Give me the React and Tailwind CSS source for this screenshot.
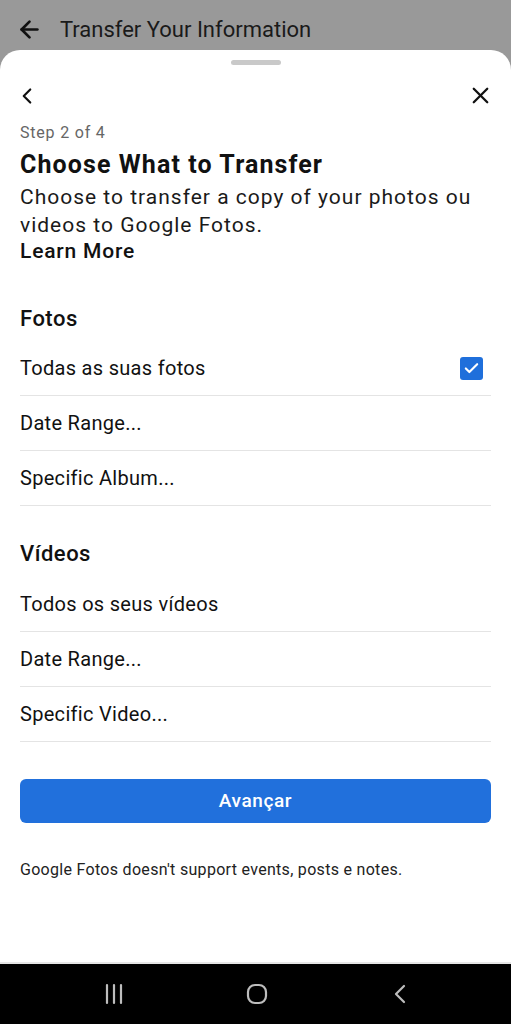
import { ArrowLeft, ChevronLeft, X, Check } from "lucide-react";

const font = { fontFamily: "Roboto, 'Noto Sans', sans-serif" };

function Row({ label, checked }) {
  return (
    <div className="flex h-[55px] items-center justify-between border-b border-[#e4e4e4]">
      <span className="text-[20px] tracking-[0.3px] text-[#111]">{label}</span>
      {checked && (
        <span className="mr-[8px] flex h-[23px] w-[23px] items-center justify-center rounded-[3px] bg-[#1f6fdb]">
          <Check className="h-[17px] w-[17px] text-white" strokeWidth={3} />
        </span>
      )}
    </div>
  );
}

export default function App() {
  return (
    <div className="flex h-[1024px] w-[511px] flex-col bg-[#999999]" style={font}>
      {/* top app bar behind the sheet */}
      <div className="flex h-[50px] shrink-0 items-center px-[16px] pt-[9px]">
        <ArrowLeft className="h-[27px] w-[27px] text-[#111]" strokeWidth={2.4} />
        <span className="ml-[17px] text-[22px] text-[#1a1a1a]">Transfer Your Information</span>
      </div>

      {/* bottom sheet */}
      <div className="flex flex-1 flex-col rounded-t-[20px] bg-white">
        <div className="flex justify-center pt-[10px]">
          <div className="h-[5px] w-[50px] rounded-full bg-[#c9c9c9]" />
        </div>

        <div className="flex flex-1 flex-col px-[20px]">
          <div className="mt-[17px] flex items-center justify-between">
            <ChevronLeft className="-ml-[6px] h-[26px] w-[26px] text-[#111]" strokeWidth={2} />
            <X className="-mr-[3px] h-[27px] w-[27px] text-[#111]" strokeWidth={2} />
          </div>

          <div className="mt-[14px] text-[16px] leading-[20px] tracking-[0.8px] text-[#666]">Step 2 of 4</div>
          <div className="mt-[7px] text-[25px] font-bold leading-[30px] tracking-[1.1px] text-[#111]">
            Choose What to Transfer
          </div>
          <p className="mt-[3px] text-[21px] leading-[28px] tracking-[1px] text-[#1a1a1a]">
            Choose to transfer a copy of your photos ou videos to Google Fotos.
          </p>
          <div className="text-[21px] font-medium leading-[24px] tracking-[0.8px] text-[#111]">Learn More</div>

          <div className="mt-[43px] h-[26px] text-[22px] font-medium leading-[26px] tracking-[0.5px] text-[#111]">Fotos</div>
          <div className="mt-[9px]">
            <Row label="Todas as suas fotos" checked />
            <Row label="Date Range..." />
            <Row label="Specific Album..." />
          </div>

          <div className="mt-[35px] h-[26px] text-[22px] font-medium leading-[26px] tracking-[0.5px] text-[#111]">Vídeos</div>
          <div className="mt-[10px]">
            <Row label="Todos os seus vídeos" />
            <Row label="Date Range..." />
            <Row label="Specific Video..." />
          </div>

          <button className="mt-[37px] flex h-[44px] w-full items-center justify-center rounded-[6px] bg-[#2170dc] text-[19px] font-medium tracking-[0.6px] text-white">
            Avançar
          </button>

          <p className="mt-[37px] text-[16px] leading-[20px] tracking-[0.3px] text-[#222]">
            Google Fotos doesn't support events, posts e notes.
          </p>
        </div>

        {/* android nav bar */}
        <div className="flex h-[62px] shrink-0 items-center gap-[103px] border-t-2 border-[#e6e6e6] bg-black pl-[94px]">
          <div className="flex w-[40px] justify-center">
            <svg width="20" height="22" viewBox="0 0 20 22" className="text-[#bdbdbd]">
              <path d="M3 2v18M10 2v18M17 2v18" stroke="currentColor" strokeWidth="2.2" strokeLinecap="round" />
            </svg>
          </div>
          <div className="flex w-[40px] justify-center">
            <svg width="22" height="22" viewBox="0 0 22 22" className="text-[#bdbdbd]">
              <rect x="2" y="2" width="18" height="18" rx="7" fill="none" stroke="currentColor" strokeWidth="2.2" />
            </svg>
          </div>
          <div className="flex w-[40px] justify-center">
            <svg width="14" height="22" viewBox="0 0 14 22" className="text-[#bdbdbd]">
              <path d="M11 3L3 11l8 8" fill="none" stroke="currentColor" strokeWidth="2.2" strokeLinecap="round" strokeLinejoin="round" />
            </svg>
          </div>
        </div>
      </div>
    </div>
  );
}
